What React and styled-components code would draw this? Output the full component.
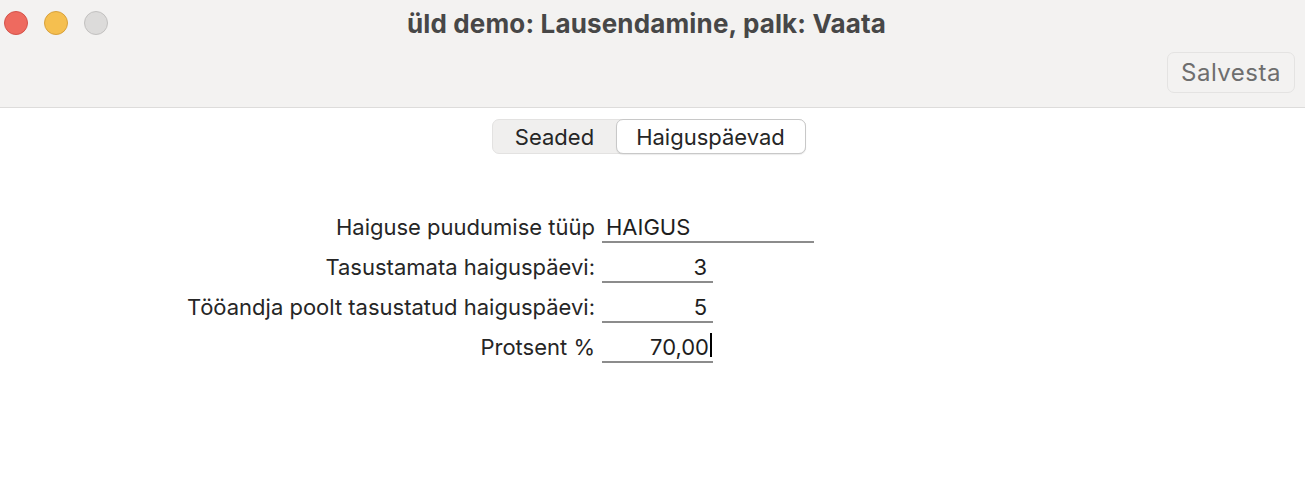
import React from "react"
import styled, { createGlobalStyle } from "styled-components"

const GlobalStyle = createGlobalStyle`
  html, body {
    margin: 0;
    padding: 0;
    background: #ffffff;
  }
  body {
    font-family: Inter, "Noto Sans", "Liberation Sans", sans-serif;
    -webkit-font-smoothing: antialiased;
  }
`

const Window = styled.div`
  width: 1305px;
  height: 481px;
  background: #ffffff;
  overflow: hidden;
`

const TitleBar = styled.div`
  height: 107px;
  background: #f3f2f1;
  border-bottom: 1px solid #dddcdb;
  display: flex;
  flex-direction: column;
`

const TitleRow = styled.div`
  height: 46px;
  display: grid;
  grid-template-columns: 1fr auto 1fr;
  align-items: center;
  padding-right: 12px;
`

const Lights = styled.div`
  display: flex;
  gap: 16px;
  padding-left: 4px;
`

const Light = styled.span`
  width: 22px;
  height: 22px;
  border-radius: 50%;
  background: ${p => p.color};
  border: 1px solid ${p => p.edge};
`

const Title = styled.h1`
  margin: 0;
  font-size: 26px;
  font-weight: 700;
  color: #474747;
  letter-spacing: 0.15px;
`

const Toolbar = styled.div`
  display: flex;
  justify-content: flex-end;
  padding: 6px 10px 0 0;
`

const ToolButton = styled.button`
  width: 128px;
  height: 41px;
  border: 1px solid #e4e3e2;
  border-radius: 7px;
  background: #f3f2f1;
  color: #6e6e6e;
  font-family: inherit;
  font-size: 24px;
  letter-spacing: 0.5px;
  padding: 0;
`

const Content = styled.div`
  display: flex;
  flex-direction: column;
`

const TabsRow = styled.div`
  display: flex;
  justify-content: center;
  padding: 11px 8px 0 0;
`

const Segmented = styled.div`
  display: flex;
  width: 314px;
  height: 35px;
  box-sizing: border-box;
  background: #f0efee;
  border: 1px solid #e3e2e1;
  border-radius: 7px;
`

const Segment = styled.div`
  flex: ${p => (p.active ? "0 0 190px" : "1")};
  box-sizing: border-box;
  display: flex;
  align-items: center;
  justify-content: center;
  font-size: 22px;
  color: #262626;
  border-radius: 7px;
  margin: -1px;
  background: ${p => (p.active ? "#ffffff" : "transparent")};
  border: ${p => (p.active ? "1px solid #c8c8c8" : "1px solid transparent")};
  box-shadow: ${p => (p.active ? "0 1px 1px rgba(0,0,0,0.08)" : "none")};
`

const Form = styled.div`
  display: grid;
  grid-template-columns: 595px auto;
  column-gap: 7px;
  row-gap: 10px;
  padding-top: 59px;
  align-items: start;
`

const Label = styled.div`
  justify-self: end;
  font-size: 22px;
  color: #262626;
  line-height: 28px;
`

const Field = styled.div`
  width: ${p => p.width}px;
  height: 30px;
  box-sizing: border-box;
  border-bottom: 2px solid #8c8c8c;
  font-size: 22px;
  line-height: 28px;
  color: #1e1e1e;
  text-align: ${p => (p.numeric ? "right" : "left")};
  padding: ${p => (p.focused ? "0 1px 0 0" : p.numeric ? "0 6px 0 0" : "0 0 0 4px")};
  white-space: nowrap;
`

const Caret = styled.span`
  display: inline-block;
  width: 2px;
  height: 24px;
  background: #000;
  vertical-align: -2px;
  margin-left: 1px;
`

const rows = [
  { label: "Haiguse puudumise tüüp", value: "HAIGUS", width: 212 },
  { label: "Tasustamata haiguspäevi:", value: "3", width: 111, numeric: true },
  { label: "Tööandja poolt tasustatud haiguspäevi:", value: "5", width: 111, numeric: true },
  { label: "Protsent %", value: "70,00", width: 111, numeric: true, focused: true },
]

const App = () => (
  <Window>
    <GlobalStyle />
    <TitleBar>
      <TitleRow>
        <Lights>
          <Light color="#ee6a5f" edge="#d4534a" />
          <Light color="#f5bf4f" edge="#d8a13c" />
          <Light color="#dcdbda" edge="#c2c1c0" />
        </Lights>
        <Title>üld demo: Lausendamine, palk: Vaata</Title>
        <div />
      </TitleRow>
      <Toolbar>
        <ToolButton>Salvesta</ToolButton>
      </Toolbar>
    </TitleBar>
    <Content>
      <TabsRow>
        <Segmented>
          <Segment>Seaded</Segment>
          <Segment active>Haiguspäevad</Segment>
        </Segmented>
      </TabsRow>
      <Form>
        {rows.map(r => (
          <React.Fragment key={r.label}>
            <Label>{r.label}</Label>
            <Field width={r.width} numeric={r.numeric} focused={r.focused}>
              {r.value}
              {r.focused && <Caret />}
            </Field>
          </React.Fragment>
        ))}
      </Form>
    </Content>
  </Window>
)

export default App
